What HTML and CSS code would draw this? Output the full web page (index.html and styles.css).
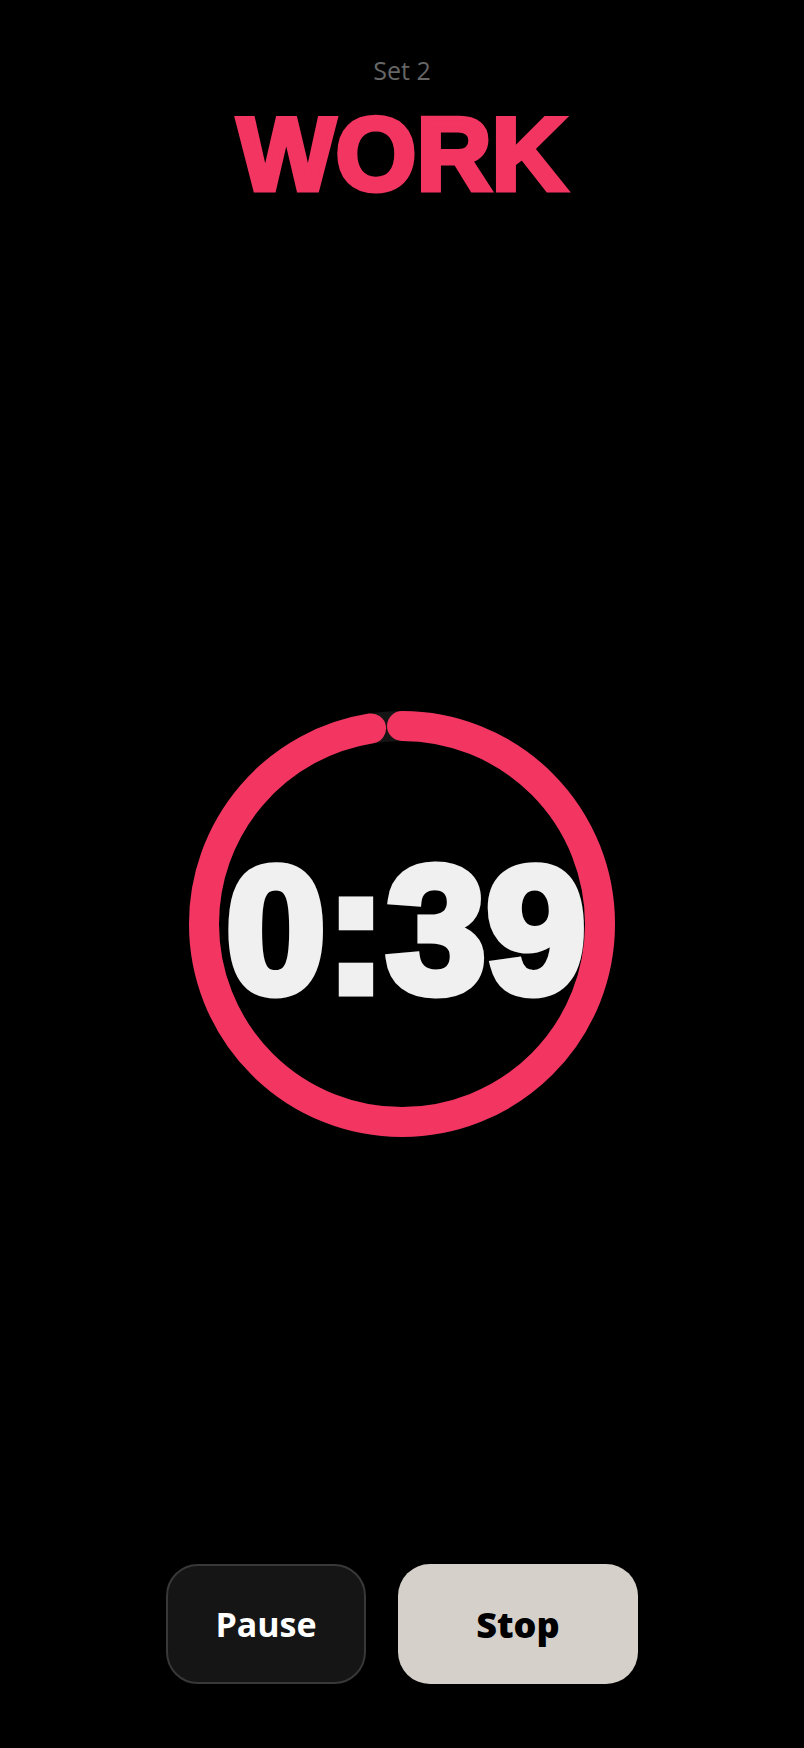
FILE: index.html
```html
<!DOCTYPE html>
<html lang="en">
<head>
<meta charset="utf-8">
<meta name="viewport" content="width=device-width, initial-scale=1">
<title>Interval timer</title>
<link rel="stylesheet" href="styles.css">
</head>
<body class="screen">
<header class="header">
<p class="set">Set 2</p>
<h1 class="phase">WORK</h1>
</header>
<main class="timer">
<svg class="ring" viewBox="0 0 426 426" aria-hidden="true">
<circle class="ring-track" cx="213" cy="213" r="198"/>
<circle class="ring-progress" cx="213" cy="213" r="198" pathLength="40" stroke-dasharray="39 40" transform="rotate(-90 213 213)"/>
</svg>
<div class="time" role="timer">0:39</div>
</main>
<footer class="actions">
<button class="button button-pause" type="button">Pause</button>
<button class="button button-stop" type="button">Stop</button>
</footer>
</body>
</html>
```
FILE: styles.css
```css
* { box-sizing: border-box; }

.screen {
  margin: 0;
  min-height: 100vh;
  display: flex;
  flex-direction: column;
  background: #000;
  color: #f0f0f0;
  font-family: "Open Sans", "Noto Sans", sans-serif;
}

.header {
  display: flex;
  flex-direction: column;
  align-items: center;
  gap: 16px;
  padding: 54px 32px 78px;
}

.set {
  margin: 0;
  color: #666;
  font-size: 25px;
  line-height: 32px;
}

.phase {
  margin: 0;
  color: #f23561;
  font-family: "Arial Black", "Liberation Sans", sans-serif;
  font-size: 104px;
  font-weight: 900;
  line-height: 104px;
  -webkit-text-stroke: 5px currentColor;
}

.timer {
  flex: 1;
  display: grid;
  place-content: center;
  place-items: center;
}

.ring, .time { grid-area: 1 / 1; }

.ring {
  width: 426px;
  max-width: 90vw;
}

.ring-track, .ring-progress {
  fill: none;
  stroke-width: 30;
}

.ring-track { stroke: #151515; }

.ring-progress {
  stroke: #f23561;
  stroke-linecap: round;
}

.time {
  padding: 12px 0 0 8px;
  font-family: "Arial Black", "Liberation Sans", sans-serif;
  font-size: 180px;
  font-weight: 900;
  line-height: 1;
  -webkit-text-stroke: 9px currentColor;
}

.actions {
  display: flex;
  justify-content: center;
  gap: 32px;
  padding: 0 32px 64px;
}

.button {
  height: 120px;
  border: 0;
  border-radius: 32px;
  font-family: inherit;
  font-size: 34px;
}

.button-pause {
  width: 200px;
  border: 2px solid #383838;
  background: #151515;
  color: #fff;
  font-weight: 700;
}

.button-stop {
  width: 240px;
  background: #d5d0ca;
  color: #000;
  font-size: 36px;
  font-weight: 800;
}
```
